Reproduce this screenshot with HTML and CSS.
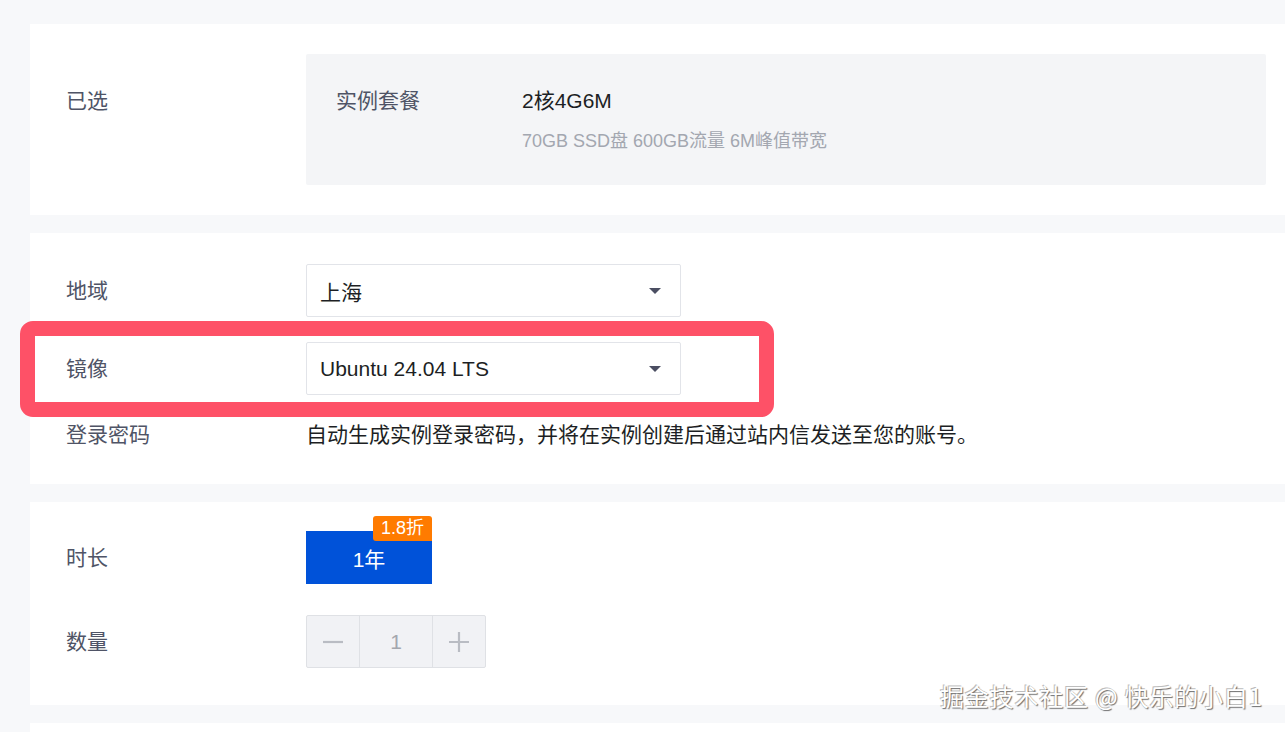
FILE: index.html
```html
<!DOCTYPE html>
<html lang="zh-CN">
<head>
<meta charset="utf-8">
<title>购买实例</title>
<link rel="stylesheet" href="styles.css">
</head>
<body>
<main class="page">
  <section class="card card-selected">
    <div class="row row-top">
      <div class="label label-top">已选</div>
      <div class="summary">
        <div class="summary-key">实例套餐</div>
        <div class="summary-val">
          <div class="spec">2核4G6M</div>
          <div class="spec-sub">70GB SSD盘 600GB流量 6M峰值带宽</div>
        </div>
      </div>
    </div>
  </section>

  <section class="card card-config">
    <div class="row">
      <div class="label">地域</div>
      <div class="select">
        <span class="select-text">上海</span>
        <span class="caret"></span>
      </div>
    </div>
    <div class="row">
      <div class="label">镜像</div>
      <div class="select">
        <span class="select-text">Ubuntu 24.04 LTS</span>
        <span class="caret"></span>
      </div>
    </div>
    <div class="row row-text">
      <div class="label">登录密码</div>
      <div class="desc">自动生成实例登录密码，并将在实例创建后通过站内信发送至您的账号。</div>
    </div>
    <div class="highlight"></div>
  </section>

  <section class="card card-buy">
    <div class="row">
      <div class="label">时长</div>
      <div class="duration">
        <button class="dur-btn">1年</button>
        <span class="badge">1.8折</span>
      </div>
    </div>
    <div class="row">
      <div class="label">数量</div>
      <div class="stepper">
        <span class="step step-minus"><svg width="22" height="22" viewBox="0 0 22 22"><path d="M1 11h20" stroke="#b9bcc3" stroke-width="2.2"/></svg></span>
        <span class="step-num">1</span>
        <span class="step step-plus"><svg width="22" height="22" viewBox="0 0 22 22"><path d="M1 11h20M11 1v20" stroke="#b9bcc3" stroke-width="2.2"/></svg></span>
      </div>
    </div>
  </section>

  <section class="card card-next"></section>
</main>
<div class="watermark">掘金技术社区 @ 快乐的小白1</div>
</body>
</html>
```

FILE: styles.css
```css
html, body {
  margin: 0;
  padding: 0;
  height: 100%;
  overflow: hidden;
}
body {
  background: #f7f8fa;
  font-family: "Liberation Sans", "Noto Sans CJK SC", sans-serif;
  font-size: 21px;
  color: #1d1f24;
}
.page {
  padding: 24px 0 0 30px;
  display: flex;
  flex-direction: column;
  gap: 18px;
}
.card {
  background: #fff;
  position: relative;
  display: flex;
  flex-direction: column;
}
.card-selected {
  padding: 30px 19px 30px 36px;
}
.card-config {
  padding: 31px 0 34px 36px;
  gap: 25px;
}
.card-buy {
  padding: 29px 0 37px 36px;
  gap: 31px;
}
.card-next {
  height: 9px;
}
.row {
  display: flex;
  align-items: center;
}
.row-top {
  align-items: flex-start;
}
.label {
  width: 240px;
  flex: none;
  color: #4f5466;
  line-height: 30px;
}
.label-top {
  margin-top: 32px;
}
.summary {
  flex: 1;
  background: #f4f5f7;
  border-radius: 2px;
  padding: 32px 30px 29px 30px;
  display: flex;
  height: 70px;
}
.summary-key {
  width: 186px;
  flex: none;
  color: #4f5466;
  line-height: 30px;
}
.spec {
  line-height: 30px;
  color: #1d1f24;
}
.spec-sub {
  margin-top: 10px;
  line-height: 30px;
  font-size: 18px;
  color: #a3a7b0;
}
.select {
  box-sizing: border-box;
  width: 375px;
  height: 53px;
  border: 1px solid #e2e4e9;
  border-radius: 2px;
  display: flex;
  align-items: center;
  justify-content: space-between;
  padding: 0 19px 0 13px;
}
.select-text {
  color: #1d1f24;
  padding-top: 1px;
}
.caret {
  width: 0;
  height: 0;
  border-left: 6px solid transparent;
  border-right: 6px solid transparent;
  border-top: 6px solid #4b4e62;
  margin-top: 1px;
}
.row-text {
  line-height: 30px;
}
.desc {
  color: #1d1f24;
  line-height: 30px;
}
.highlight {
  position: absolute;
  left: -10px;
  top: 88px;
  width: 754px;
  height: 96px;
  box-sizing: border-box;
  border: 15px solid #fe5167;
  border-radius: 13px;
  pointer-events: none;
}
.duration {
  position: relative;
}
.dur-btn {
  width: 126px;
  height: 53px;
  border: none;
  border-radius: 0;
  background: #0052d9;
  color: #fff;
  font-family: "Liberation Sans", "Noto Sans CJK SC", sans-serif;
  font-size: 21px;
  padding: 0;
  display: block;
}
.badge {
  position: absolute;
  right: 0;
  top: -15px;
  width: 59px;
  height: 25px;
  line-height: 25px;
  text-align: center;
  background: #ff7b00;
  color: #fff;
  font-size: 18px;
  border-radius: 3px 3px 0 3px;
}
.stepper {
  display: flex;
  height: 53px;
  box-sizing: border-box;
  border: 1px solid #dfe1e5;
  background: #f1f2f5;
  border-radius: 2px;
}
.step {
  width: 52px;
  display: flex;
  align-items: center;
  justify-content: center;
}
.step-num {
  width: 72px;
  border-left: 1px solid #dfe1e5;
  border-right: 1px solid #dfe1e5;
  display: flex;
  align-items: center;
  justify-content: center;
  color: #a4a7ae;
}
.watermark {
  position: absolute;
  left: 940px;
  top: 678px;
  font-family: "Noto Sans CJK SC", sans-serif;
  font-size: 24px;
  color: #fff;
  text-shadow: 1px 1px 1px #6d6d6d, -1px -1px 0 #bdbdbd;
  white-space: nowrap;
  letter-spacing: 0.8px;
}
```
